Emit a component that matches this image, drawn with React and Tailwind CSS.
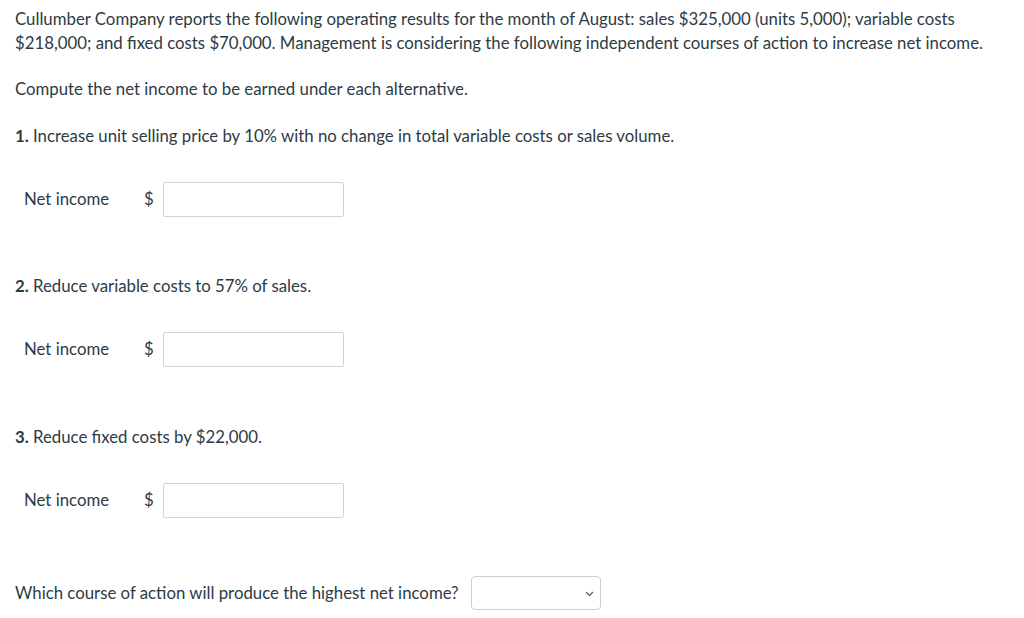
import React from 'react';

const NetIncomeRow = () => (
  <div className="flex items-center h-[34px] pl-[9px]">
    <span className="w-[120px]">Net income</span>
    <span className="w-[19px]">$</span>
    <input
      type="text"
      className="w-[181px] h-[35px] border border-[#d4d4d4] rounded-[2px] bg-white outline-none"
    />
  </div>
);

export default function App() {
  return (
    <div
      className="bg-white min-h-[618px] w-[1024px] text-[16.8px] leading-[24px] text-[#2d3b45] px-[15px] pt-[7px]"
      style={{ fontFamily: 'Lato, "Liberation Sans", sans-serif' }}
    >
      <p className="w-[970px]">
        Cullumber Company reports the following operating results for the month of August: sales $325,000 (units 5,000); variable costs
        $218,000; and fixed costs $70,000. Management is considering the following independent courses of action to increase net income.
      </p>

      <p className="mt-[22px]">Compute the net income to be earned under each alternative.</p>

      <p className="mt-[23px]"><b className="font-bold">1.</b> Increase unit selling price by 10% with no change in total variable costs or sales volume.</p>
      <div className="mt-[34px]"><NetIncomeRow /></div>

      <p className="mt-[58px]"><b className="font-bold">2.</b> Reduce variable costs to 57% of sales.</p>
      <div className="mt-[34px]"><NetIncomeRow /></div>

      <p className="mt-[59px]"><b className="font-bold">3.</b> Reduce fixed costs by $22,000.</p>
      <div className="mt-[34px]"><NetIncomeRow /></div>

      <div className="mt-[59px] flex items-center">
        <span className="mr-[12px]">Which course of action will produce the highest net income?</span>
        <div className="relative w-[130px] h-[34px] border border-[#cfcfcf] rounded-[4px] bg-white">
          <svg className="absolute right-[6px] top-[14px]" width="9" height="6" viewBox="0 0 9 6" fill="none">
            <path d="M1 1l3.5 3.5L8 1" stroke="#555" strokeWidth="1.1" />
          </svg>
        </div>
      </div>
    </div>
  );
}
